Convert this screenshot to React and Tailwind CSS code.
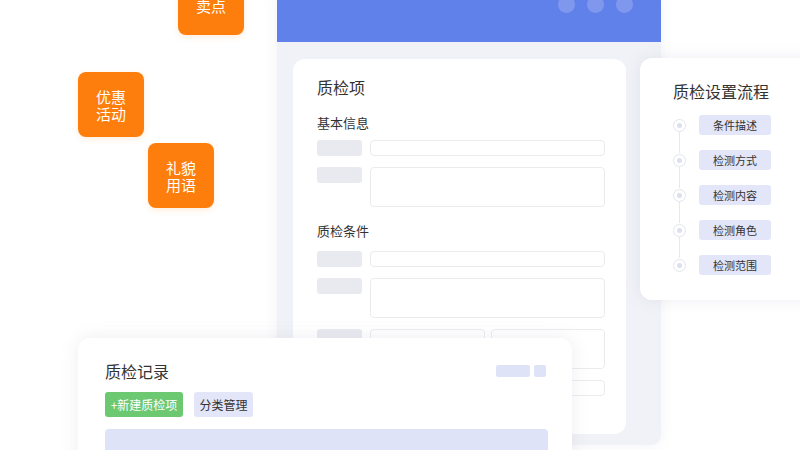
import React from 'react';

const font = { fontFamily: '"Noto Sans CJK SC", "Noto Sans", sans-serif' };

function Tag({ lines, className }) {
  return (
    <div
      className={`absolute w-[66px] h-[65px] rounded-[8px] bg-[#fd7e0c] text-white text-[15px] leading-[17px] flex flex-col items-center shadow-[0_2px_6px_rgba(253,126,12,0.15)] ${className}`}
    >
      <p className="text-center">
        {lines.map((l, i) => (
          <React.Fragment key={l}>
            {i > 0 && <br />}
            {l}
          </React.Fragment>
        ))}
      </p>
    </div>
  );
}

function Field({ tall, split }) {
  return (
    <div className="flex gap-2">
      <div className="w-[45px] h-[16px] rounded-[3px] bg-[#e9eaf0] shrink-0" />
      {split ? (
        <div className="flex gap-[6px] w-[235px]">
          <div className="flex-1 h-[40px] rounded-[4px] border-[1.5px] border-[#ebebef]" />
          <div className="flex-1 h-[40px] rounded-[4px] border-[1.5px] border-[#ebebef]" />
        </div>
      ) : (
        <div
          className={`w-[235px] rounded-[4px] border-[1.5px] border-[#ebebef] ${tall ? 'h-[40px]' : 'h-[16px]'}`}
        />
      )}
    </div>
  );
}

function Step({ label, last }) {
  return (
    <div className="relative flex items-center h-[20px]">
      <div className="w-[13px] h-[13px] rounded-full border-[1.5px] border-[#e3e5ee] bg-white flex items-center justify-center shrink-0">
        <div className="w-[5px] h-[5px] rounded-full bg-[#dcdfee]" />
      </div>
      {!last && <div className="absolute left-[6px] top-[17px] w-px h-[21px] bg-[#e6e8ef]" />}
      <div className="ml-[13px] w-[72px] h-[20px] rounded-[3px] bg-[#e3e6f8] text-[11px] text-[#333] flex items-center justify-center">
        {label}
      </div>
    </div>
  );
}

export default function App() {
  return (
    <div className="relative w-[800px] h-[450px] overflow-hidden bg-white" style={font}>
      {/* main window */}
      <div className="absolute left-[277px] top-[-10px] w-[384px] h-[455px] rounded-[10px] bg-[#f0f2f7] flex flex-col overflow-hidden shadow-[0_0_14px_rgba(140,150,180,0.12)]">
        <div className="h-[52px] bg-[#6080ea] shrink-0 flex justify-end items-start gap-[12px] pr-[28px] pt-[6px]">
          <div className="w-[17px] h-[17px] rounded-full bg-[#7f98ee]" />
          <div className="w-[17px] h-[17px] rounded-full bg-[#7f98ee]" />
          <div className="w-[17px] h-[17px] rounded-full bg-[#7f98ee]" />
        </div>
        <div className="flex-1 pl-[16px] pr-[35px] pt-[17px] pb-[11px]">
          <div className="h-full bg-white rounded-[12px] pl-[24px] pt-[16px] flex flex-col">
            <div className="text-[16px] leading-[24px] text-[#333]">质检项</div>
            <div className="mt-[14px] text-[13px] leading-[20px] text-[#333]">基本信息</div>
            <div className="mt-[7px] flex flex-col gap-[11px]">
              <Field />
              <Field tall />
            </div>
            <div className="mt-[14px] text-[13px] leading-[20px] text-[#333]">质检条件</div>
            <div className="mt-[10px] flex flex-col gap-[11px]">
              <Field />
              <Field tall />
              <Field split />
              <div className="flex gap-2">
                <div className="w-[45px] shrink-0" />
                <div className="w-[235px] h-[16px] rounded-[4px] border-[1.5px] border-[#ebebef]" />
              </div>
            </div>
          </div>
        </div>
      </div>

      {/* flow card */}
      <div className="absolute left-[640px] top-[58px] w-[190px] h-[242px] rounded-[12px] bg-white shadow-[0_0_16px_rgba(140,150,180,0.14)] pl-[33px] pt-[21px]">
        <div className="text-[16px] leading-[24px] text-[#333]">质检设置流程</div>
        <div className="mt-[12px] flex flex-col gap-[15px]">
          <Step label="条件描述" />
          <Step label="检测方式" />
          <Step label="检测内容" />
          <Step label="检测角色" />
          <Step label="检测范围" last />
        </div>
      </div>

      {/* record card */}
      <div className="absolute left-[78px] top-[338px] w-[494px] h-[140px] rounded-[12px] bg-white shadow-[0_0_18px_rgba(140,150,180,0.16)] pl-[27px] pr-[26px] pt-[21px]">
        <div className="flex items-center justify-between h-[24px]">
          <div className="text-[16px] leading-[24px] text-[#333]">质检记录</div>
          <div className="flex gap-[4px]">
            <div className="w-[34px] h-[12px] rounded-[2px] bg-[#dfe3f8]" />
            <div className="w-[12px] h-[12px] rounded-[2px] bg-[#dfe3f8]" />
          </div>
        </div>
        <div className="mt-[9px] flex gap-[11px]">
          <div className="w-[78px] h-[25px] rounded-[3px] bg-[#6dc872] text-white text-[12px] flex items-center justify-center">
            +新建质检项
          </div>
          <div className="w-[59px] h-[25px] rounded-[3px] bg-[#e3e6f8] text-[#333] text-[12px] flex items-center justify-center">
            分类管理
          </div>
        </div>
        <div className="mt-[12px] w-[443px] h-[40px] rounded-[4px] bg-[#dfe3f8]" />
      </div>

      {/* orange tags */}
      <Tag lines={['卖点']} className="left-[178px] top-[-30px] justify-end pb-[21px]" />
      <Tag lines={['优惠', '活动']} className="left-[78px] top-[72px] justify-center" />
      <Tag lines={['礼貌', '用语']} className="left-[148px] top-[143px] justify-center" />
    </div>
  );
}
